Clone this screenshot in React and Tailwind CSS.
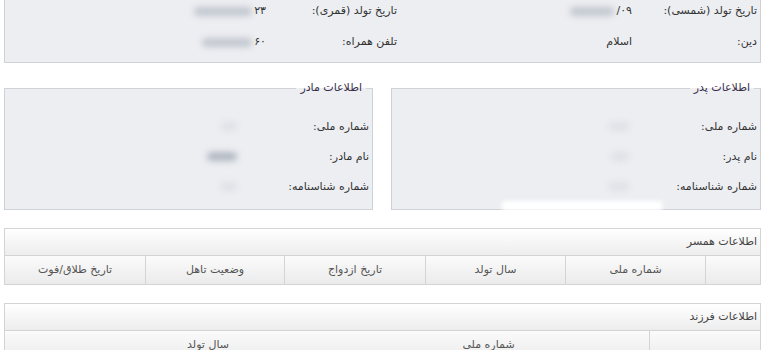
import React from "react";

// Blurred placeholder for hidden personal values
const Blur = ({ w = 40, tone = "bg-gray-400/60" }) => (
  <span
    className={`inline-block h-[9px] rounded-full blur-[3px] align-middle ${tone}`}
    style={{ width: w }}
  />
);

const InfoRow = ({ label, value }) => (
  <div className="grid grid-cols-[115px_1fr] h-[30px] items-center">
    <div className="pr-[3px]">{label}</div>
    <div className="pr-[16px]">{value}</div>
  </div>
);

const Box = ({ title, rows, className = "" }) => (
  <fieldset className={`border border-[#cfd2d6] bg-[#eceef1] px-0 pt-[17px] pb-[7px] m-0 min-w-0 ${className}`}>
    <legend className="mr-[6px] px-[4px] leading-[14px] text-[#3a2f4a]">{title}</legend>
    {rows.map((r) => (
      <InfoRow key={r.label} label={r.label} value={r.value} />
    ))}
  </fieldset>
);

const GridTable = ({ title, cols, template }) => (
  <div className="border border-[#d4d4d4]">
    <div className="h-[27px] flex items-center pr-[3px] bg-gradient-to-b from-[#ffffff] to-[#ededed] border-b border-[#d4d4d4] text-[#444]">
      {title}
    </div>
    <div className={`grid ${template} h-[28px] bg-gradient-to-b from-[#fbfbfb] to-[#ebebeb] text-[#555]`}>
      {cols.map((c, i) => (
        <div
          key={i}
          className={`flex items-center justify-center ${c.border ? "border-l border-[#d4d4d4]" : ""}`}
        >
          {c.text}
        </div>
      ))}
    </div>
  </div>
);

export default function App() {
  return (
    <div
      dir="rtl"
      className="w-[768px] h-[350px] overflow-hidden bg-white text-[11px] text-[#333]"
      style={{ fontFamily: '"DejaVu Sans", sans-serif' }}
    >
      <div className="ml-[4px] mr-[7px] relative">
        {/* Personal info panel */}
        <div className="-mt-[4px] pb-[4px] bg-[#eceef1] border border-t-0 border-[#cfd2d6]">
          <div className="grid grid-cols-[128px_235px_131px_1fr] h-[31px] items-center">
            <div className="pr-[3px]">تاریخ تولد (شمسی):</div>
            <div className="flex items-center gap-[2px]">
              <span>۰۹/</span>
              <Blur w={44} tone="bg-gray-400/50" />
            </div>
            <div className="pr-0">تاریخ تولد (قمری):</div>
            <div className="flex items-center gap-[2px]">
              <span>۲۳</span>
              <Blur w={58} tone="bg-gray-400/50" />
            </div>
          </div>
          <div className="grid grid-cols-[128px_235px_131px_1fr] h-[31px] items-center">
            <div className="pr-[3px]">دین:</div>
            <div>اسلام</div>
            <div>تلفن همراه:</div>
            <div className="flex items-center gap-[2px]">
              <span>۶۰</span>
              <Blur w={50} tone="bg-gray-400/50" />
            </div>
          </div>
        </div>

        {/* Parents */}
        <div className="mt-[18px] grid grid-cols-[370px_1fr] gap-[18px]">
          <Box
            title="اطلاعات پدر"
            rows={[
              { label: "شماره ملی:", value: <Blur w={20} tone="bg-gray-300/50" /> },
              { label: "نام پدر:", value: <Blur w={18} tone="bg-gray-300/50" /> },
              { label: "شماره شناسنامه:", value: <Blur w={20} tone="bg-gray-300/50" /> },
            ]}
          />
          <Box
            title="اطلاعات مادر"
            rows={[
              { label: "شماره ملی:", value: <span className="pr-[4px]"><Blur w={16} tone="bg-gray-300/50" /></span> },
              { label: "نام مادر:", value: <span className="pr-[4px]"><Blur w={30} tone="bg-gray-400/70" /></span> },
              { label: "شماره شناسنامه:", value: <span className="pr-[4px]"><Blur w={16} tone="bg-gray-300/50" /></span> },
            ]}
          />
        </div>
        {/* smudge over father box bottom edge */}
        <div className="absolute top-[205px] left-[498px] w-[160px] h-[10px] bg-white blur-[2px]" />

        {/* Spouse */}
        <div className="mt-[18px]">
          <GridTable
            title="اطلاعات همسر"
            template="grid-cols-[55px_140px_140px_141px_139px_1fr]"
            cols={[
              { text: "", border: true },
              { text: "شماره ملی", border: true },
              { text: "سال تولد", border: true },
              { text: "تاریخ ازدواج", border: true },
              { text: "وضعیت تاهل", border: true },
              { text: "تاریخ طلاق/فوت", border: false },
            ]}
          />
        </div>

        {/* Children */}
        <div className="mt-[18px]">
          <GridTable
            title="اطلاعات فرزند"
            template="grid-cols-[111px_321px_240px_1fr]"
            cols={[
              { text: "", border: true },
              { text: "شماره ملی", border: false },
              { text: "سال تولد", border: false },
              { text: "", border: false },
            ]}
          />
        </div>
      </div>
    </div>
  );
}
